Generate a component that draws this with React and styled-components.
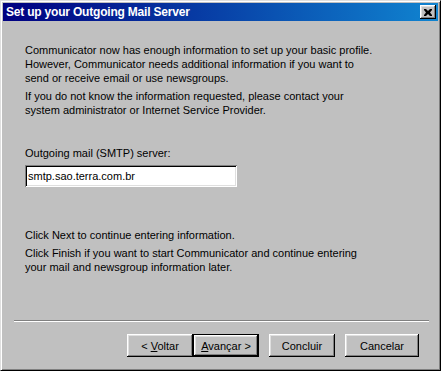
import React from 'react';
import styled, { createGlobalStyle } from 'styled-components';

const GlobalStyle = createGlobalStyle`
  html, body {
    margin: 0;
    padding: 0;
    background: #c0c0c0;
  }
  * {
    box-sizing: border-box;
  }
`;

// Window frame
const Window = styled.div`
  width: 441px;
  height: 371px;
  background: #c0c0c0;
  border: 1px solid;
  border-color: #dfdfdf #000 #000 #dfdfdf;
  box-shadow: inset 1px 1px #fff, inset -1px -1px #808080;
  padding: 2px;
  display: flex;
  flex-direction: column;
  font-family: "Liberation Sans", Arial, sans-serif;
  font-size: 11px;
  color: #000;
`;

const TitleBar = styled.div`
  height: 18px;
  flex: none;
  display: flex;
  align-items: center;
  justify-content: space-between;
  padding: 0 2px 0 3px;
  background: linear-gradient(to right, #000080, #1084d0);
`;

const Title = styled.span`
  color: #fff;
  font-weight: bold;
  font-size: 12px;
  letter-spacing: -0.2px;
  white-space: nowrap;
`;

const CloseButton = styled.button`
  width: 16px;
  height: 14px;
  padding: 0;
  display: flex;
  align-items: center;
  justify-content: center;
  background: #c0c0c0;
  border: none;
  box-shadow: inset -1px -1px #000, inset 1px 1px #fff, inset -2px -2px #808080, inset 2px 2px #dfdfdf;
`;

const Body = styled.div`
  flex: 1;
  display: flex;
  flex-direction: column;
  padding: 22px 22px 0 22px;
`;

const Para = styled.p`
  margin: 0 0 ${p => p.$gap || 4}px 0;
  line-height: 14px;
  white-space: pre-line;
`;

const Input = styled.div`
  width: 212px;
  height: 22px;
  background: #fff;
  display: flex;
  align-items: center;
  padding: 0 3px;
  margin-bottom: 41px;
  box-shadow: inset 1px 1px #808080, inset -1px -1px #fff, inset 2px 2px #000, inset -2px -2px #dfdfdf;
`;

const Footer = styled.div`
  flex: none;
  padding: 0 9px 11px 11px;
`;

const Separator = styled.div`
  height: 2px;
  border-top: 1px solid #808080;
  border-bottom: 1px solid #fff;
  margin-bottom: 12px;
`;

const ButtonRow = styled.div`
  display: flex;
  justify-content: flex-end;
  padding-right: 10px;
`;

const Button = styled.button`
  width: ${p => p.$width || 66}px;
  height: 23px;
  margin-left: ${p => p.$gap || 0}px;
  padding: 0;
  font-family: "Liberation Sans", Arial, sans-serif;
  font-size: 11px;
  color: #000;
  background: #c0c0c0;
  border: none;
  box-shadow: ${p => p.$default
    ? 'inset 0 0 0 1px #000, inset -2px -2px #000, inset 2px 2px #fff, inset -3px -3px #808080, inset 3px 3px #dfdfdf'
    : 'inset -1px -1px #000, inset 1px 1px #fff, inset -2px -2px #808080, inset 2px 2px #dfdfdf'};
`;

const Key = styled.span`
  text-decoration: underline;
`;

export default function App() {
  return (
    <>
      <GlobalStyle />
      <Window>
        <TitleBar>
          <Title>Set up your Outgoing Mail Server</Title>
          <CloseButton>
            <svg width="8" height="7" viewBox="0 0 8 7">
              <path d="M0 0h2l2 2 2-2h2v1L6 3.5 8 6v1H6L4 5 2 7H0V6l2-2.5L0 1z" fill="#000" />
            </svg>
          </CloseButton>
        </TitleBar>
        <Body>
          <Para>
            {'Communicator now has enough information to set up your basic profile.\nHowever, Communicator needs additional information if you want to\nsend or receive email or use newsgroups.'}
          </Para>
          <Para $gap={29}>
            {'If you do not know the information requested, please contact your\nsystem administrator or Internet Service Provider.'}
          </Para>
          <Para $gap={5}>Outgoing mail (SMTP) server:</Para>
          <Input>smtp.sao.terra.com.br</Input>
          <Para>Click Next to continue entering information.</Para>
          <Para>
            {'Click Finish if you want to start Communicator and continue entering\nyour mail and newsgroup information later.'}
          </Para>
        </Body>
        <Footer>
          <Separator />
          <ButtonRow>
            <Button>&lt; <Key>V</Key>oltar</Button>
            <Button $default><Key>A</Key>vançar &gt;</Button>
            <Button $gap={10}>Concluir</Button>
            <Button $gap={10} $width={74}>Cancelar</Button>
          </ButtonRow>
        </Footer>
      </Window>
    </>
  );
}
